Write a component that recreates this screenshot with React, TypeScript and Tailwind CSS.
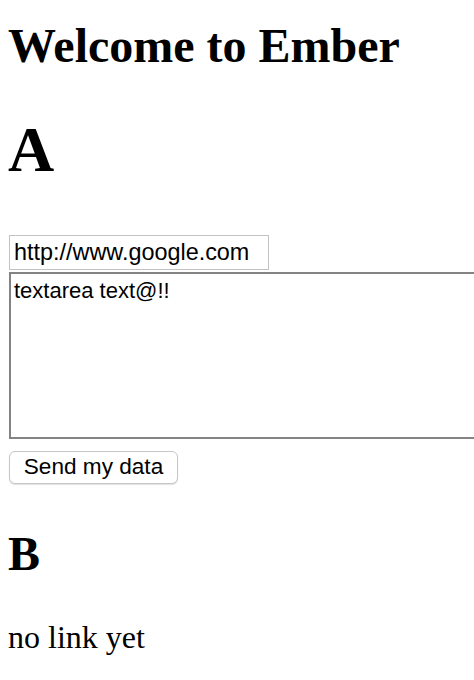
export default function App() {
  return (
    <div className="min-h-[680px] overflow-hidden bg-white pl-2 font-['Liberation_Serif',serif] text-black">
      <h2 className="mt-[18px] text-[48px] font-bold leading-[normal]">Welcome to Ember</h2>

      <h1 className="mt-[40px] text-[64px] font-bold leading-[normal]">A</h1>

      <form className="mt-[48px] flex flex-col items-start pl-px" onSubmit={(e) => e.preventDefault()}>
        <input
          type="text"
          defaultValue="http://www.google.com"
          className="h-[35px] w-[260px] border border-[#c3c3c3] bg-white px-[4px] py-0 font-['Liberation_Sans',Arial,sans-serif] text-[23.4px] leading-[normal] text-black outline-none"
        />
        <textarea
          defaultValue="textarea text@!!"
          className="mt-[2px] h-[167px] w-[520px] shrink-0 resize-none border-2 border-[#838383] bg-white px-[3px] pt-[4px] font-['Liberation_Sans',Arial,sans-serif] text-[22px] leading-[normal] text-black outline-none"
        />
        <button
          type="submit"
          className="mt-[12px] h-[33px] w-[169px] rounded-[6px] border border-[#c6c6c6] bg-white font-['Liberation_Sans',Arial,sans-serif] text-[22.6px] leading-none text-black shadow-[0_1px_1px_rgba(0,0,0,0.12)]"
        >
          Send my data
        </button>
      </form>

      <h1 className="mt-[42px] text-[48px] font-bold leading-[normal]">B</h1>

      <p className="mt-[38px] text-[32px] leading-[normal]">no link yet</p>
    </div>
  );
}
